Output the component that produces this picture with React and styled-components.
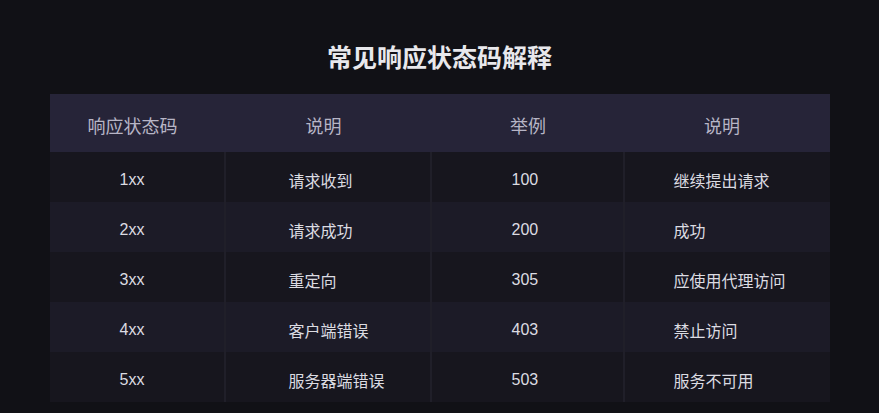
import React from "react";
import styled, { createGlobalStyle } from "styled-components";

const GlobalStyle = createGlobalStyle`
  html, body {
    margin: 0;
    padding: 0;
    background: #111116;
  }
  body {
    font-family: "Liberation Sans", "Noto Sans CJK SC", sans-serif;
  }
`;

const Page = styled.div`
  width: 879px;
  height: 413px;
  background: #111116;
  display: flex;
  flex-direction: column;
  align-items: center;
  overflow: hidden;
`;

const Title = styled.h1`
  margin: 40px 0 22px;
  height: 32px;
  line-height: 32px;
  font-size: 25px;
  font-weight: 700;
  color: #e8e8ec;
  font-family: "Noto Sans CJK SC", sans-serif;
`;

const Table = styled.div`
  width: 780px;
  display: grid;
  grid-template-columns: 176px 206px 193px 205px;
`;

const HeadCell = styled.div`
  height: 58px;
  background: #262438;
  display: flex;
  align-items: center;
  justify-content: center;
  padding-top: 4px;
  padding-right: ${(p) => p.$shift}px;
  box-sizing: border-box;
  font-size: 18px;
  color: #b7b5c6;
  font-family: "Noto Sans CJK SC", sans-serif;
`;

const Cell = styled.div`
  height: 50px;
  box-sizing: border-box;
  display: flex;
  align-items: center;
  padding-top: 5px;
  padding-left: ${(p) => p.$indent}px;
  background: ${(p) => (p.$alt ? "#1c1b27" : "#17161e")};
  border-right: ${(p) => (p.$last ? "none" : "2px solid #201f29")};
  font-size: 16px;
  color: #dcdce2;
`;

const headers = ["响应状态码", "说明", "举例", "说明"];
const headShift = [10, 10, 0, 10];
const indents = [70, 63, 80, 49];

const rows = [
  ["1xx", "请求收到", "100", "继续提出请求"],
  ["2xx", "请求成功", "200", "成功"],
  ["3xx", "重定向", "305", "应使用代理访问"],
  ["4xx", "客户端错误", "403", "禁止访问"],
  ["5xx", "服务器端错误", "503", "服务不可用"],
];

const App = () => {
  return (
    <Page>
      <GlobalStyle />
      <Title>常见响应状态码解释</Title>
      <Table>
        {headers.map((h, i) => (
          <HeadCell key={"h" + i} $shift={headShift[i]}>
            {h}
          </HeadCell>
        ))}
        {rows.map((row, r) =>
          row.map((text, c) => (
            <Cell
              key={r + "-" + c}
              $alt={r % 2 === 1}
              $indent={indents[c]}
              $last={c === row.length - 1}
            >
              {text}
            </Cell>
          ))
        )}
      </Table>
    </Page>
  );
};

export default App;
